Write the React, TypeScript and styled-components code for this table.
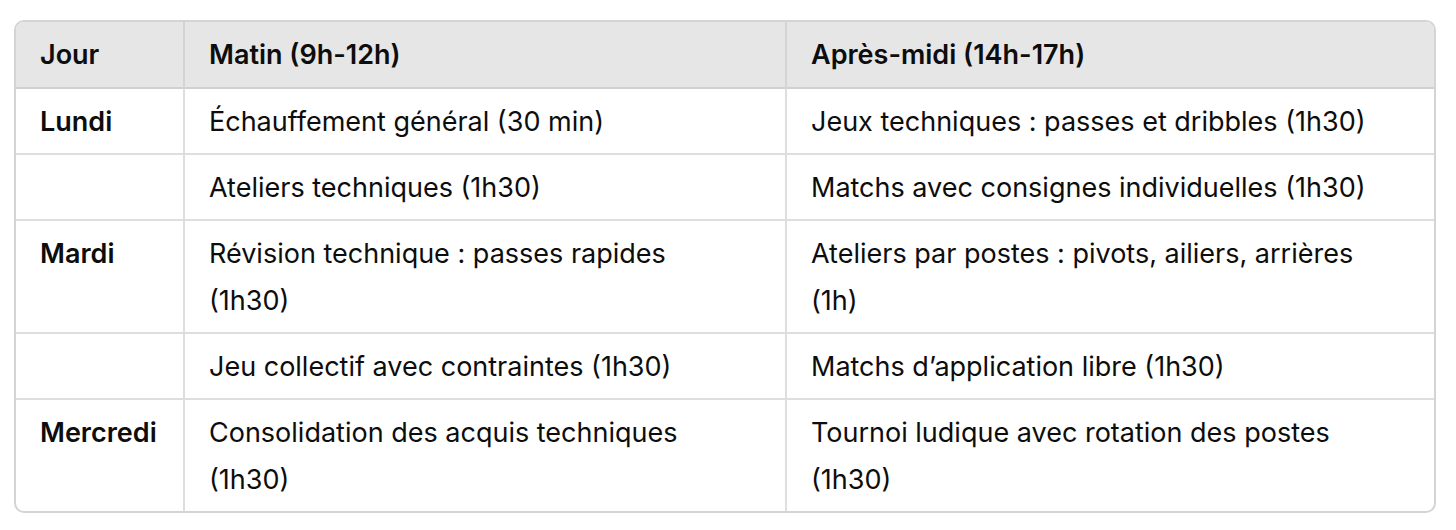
import React from 'react';
import styled, { createGlobalStyle } from 'styled-components';

const GlobalStyle = createGlobalStyle`
  html, body {
    margin: 0;
    padding: 0;
    background: #ffffff;
  }
  body {
    font-family: Inter, 'Noto Sans', 'Liberation Sans', sans-serif;
    color: #0d0d0d;
  }
`;

const Page = styled.div`
  padding: 20px 20px 0 14px;
  width: 1422px;
`;

const TableWrapper = styled.div`
  border: 2px solid #d4d4d4;
  border-radius: 10px;
  overflow: hidden;
`;

const Table = styled.table`
  width: 100%;
  border-collapse: collapse;
  table-layout: fixed;
  font-size: 27px;
  line-height: 47px;
`;

const HeadRow = styled.tr`
  background: #e6e6e6;
  border-bottom: 2px solid #d0d0d0;
`;

const Row = styled.tr`
  & + & {
    border-top: 2px solid #dedede;
  }
`;

const Th = styled.th`
  text-align: left;
  font-weight: 600;
  padding: 9px 48px 9px 24px;
  & + & {
    border-left: 2px solid #d4d4d4;
  }
`;

const Td = styled.td<{ $bold?: boolean }>`
  vertical-align: top;
  padding: 9px 48px 8px 24px;
  font-weight: ${(p) => (p.$bold ? 600 : 400)};
  & + & {
    border-left: 2px solid #dedede;
  }
`;

const rows: [string, string, string][] = [
  ['Lundi', 'Échauffement général (30 min)', 'Jeux techniques : passes et dribbles (1h30)'],
  ['', 'Ateliers techniques (1h30)', 'Matchs avec consignes individuelles (1h30)'],
  ['Mardi', 'Révision technique : passes rapides (1h30)', 'Ateliers par postes : pivots, ailiers, arrières (1h)'],
  ['', 'Jeu collectif avec contraintes (1h30)', 'Matchs d’application libre (1h30)'],
  ['Mercredi', 'Consolidation des acquis techniques (1h30)', 'Tournoi ludique avec rotation des postes (1h30)'],
];

const App = () => {
  return (
    <>
      <GlobalStyle />
      <Page>
        <TableWrapper>
          <Table>
            <colgroup>
              <col style={{ width: 168 }} />
              <col style={{ width: 602 }} />
              <col />
            </colgroup>
            <thead>
              <HeadRow>
                <Th>Jour</Th>
                <Th>Matin (9h-12h)</Th>
                <Th>Après-midi (14h-17h)</Th>
              </HeadRow>
            </thead>
            <tbody>
              {rows.map(([day, am, pm], i) => (
                <Row key={i}>
                  <Td $bold>{day}</Td>
                  <Td>{am}</Td>
                  <Td>{pm}</Td>
                </Row>
              ))}
            </tbody>
          </Table>
        </TableWrapper>
      </Page>
    </>
  );
};

export default App;
